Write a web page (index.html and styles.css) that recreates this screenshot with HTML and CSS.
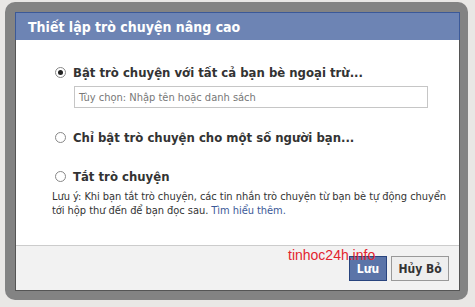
FILE: index.html
```html
<!DOCTYPE html>
<html lang="vi">
<head>
    <meta charset="UTF-8">
    <title>Thiết lập trò chuyện nâng cao</title>
    <link rel="stylesheet" href="styles.css">
</head>
<body>
    <div class="frame">
        <div class="dialog">
            <div class="dialog-title">Thiết lập trò chuyện nâng cao</div>
            <div class="dialog-body">
                <label class="option">
                    <span class="radio checked"></span>
                    <span>Bật trò chuyện với tất cả bạn bè ngoại trừ...</span>
                </label>
                <div class="except-box">Tùy chọn: Nhập tên hoặc danh sách</div>

                <label class="option">
                    <span class="radio"></span>
                    <span>Chỉ bật trò chuyện cho một số người bạn...</span>
                </label>

                <label class="option">
                    <span class="radio"></span>
                    <span>Tắt trò chuyện</span>
                </label>

                <div class="note">
                    <div>Lưu ý: Khi bạn tắt trò chuyện, các tin nhắn trò chuyện từ bạn bè tự động chuyển</div>
                    <div>tới hộp thư đến để bạn đọc sau. <a href="#">Tìm hiểu thêm.</a></div>
                </div>
            </div>
            <div class="dialog-footer">
                <span class="watermark">tinhoc24h.info</span>
                <button class="btn btn-save">Lưu</button>
                <button class="btn btn-cancel">Hủy Bỏ</button>
            </div>
        </div>
    </div>
</body>
</html>
```

FILE: styles.css
```css
body {
    margin: 0;
    height: 307px;
    overflow: hidden;
    font-family: Tahoma, "DejaVu Sans Condensed", "DejaVu Sans", sans-serif;
    background: #e9e7e5;
}
.frame {
    margin: 2px 7px 0 5px;
    height: 298px;
    box-sizing: border-box;
    padding: 10px 8px 9px 10px;
    background: #838383;
    border-radius: 10px;
}
.dialog {
    height: 100%;
    display: flex;
    flex-direction: column;
    background: #fff;
    border: 1px solid #555;
    box-sizing: border-box;
}
.dialog-title {
    height: 28px;
    box-sizing: border-box;
    margin: -1px -1px 0 -1px;
    padding: 6px 12px 0;
    background: #6d84b4;
    border: 1px solid #3b5998;
    border-bottom: none;
    color: #fff;
    font-size: 14px;
    font-weight: bold;
}
.dialog-body {
    flex: 1;
    padding: 24px 10px 0 39px;
}
.option {
    display: flex;
    align-items: center;
    gap: 7px;
    font-size: 13px;
    font-weight: bold;
    color: #333;
    height: 16px;
}
.radio {
    width: 11px;
    height: 11px;
    border: 1px solid #888;
    border-radius: 50%;
    box-sizing: border-box;
    position: relative;
    flex: none;
    background: #fff;
}
.radio.checked::after {
    content: "";
    position: absolute;
    left: 2px;
    top: 2px;
    width: 5px;
    height: 5px;
    border-radius: 50%;
    background: #222;
}
.except-box {
    margin: 6px 21px 21px 19px;
    height: 22px;
    box-sizing: border-box;
    border: 1px solid #c6c6c6;
    padding: 4px 4px 0;
    font-size: 11px;
    color: #777;
}
.option + .option {
    margin-top: 23px;
}
.note {
    margin: 6px -10px 0 -3px;
    font-size: 11px;
    line-height: 14px;
    letter-spacing: -0.05px;
    white-space: nowrap;
    color: #333;
}
.note a {
    color: #3b5998;
    text-decoration: none;
}
.dialog-footer {
    position: relative;
    height: 45px;
    box-sizing: border-box;
    border-top: 1px solid #ccc;
    background: #f2f2f2;
    display: flex;
    justify-content: flex-end;
    align-items: flex-start;
    gap: 4px;
    padding: 10px 10px 0 0;
}
.btn {
    height: 25px;
    font-family: inherit;
    font-size: 12px;
    font-weight: bold;
    padding: 0;
    white-space: nowrap;
    cursor: pointer;
}
.btn-save {
    background: #5b74a8;
    border: 1px solid #29447e;
    color: #fff;
    width: 38px;
}
.btn-cancel {
    background: #eee;
    border: 1px solid #999;
    color: #333;
    width: 58px;
}
.watermark {
    position: absolute;
    left: 272px;
    top: 1px;
    font-family: "Liberation Sans", sans-serif;
    font-size: 14px;
    color: #e3242f;
}
```
